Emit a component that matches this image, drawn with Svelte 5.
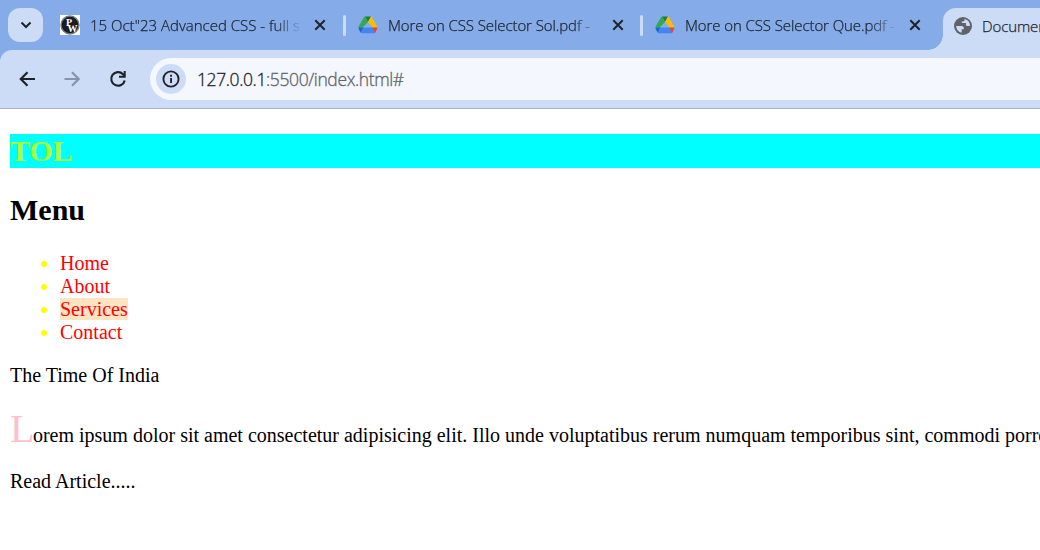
<script>
  const tabs = [
    { title: '15 Oct"23 Advanced CSS - full s', icon: 'pw' },
    { title: 'More on CSS Selector Sol.pdf -', icon: 'drive' },
    { title: 'More on CSS Selector Que.pdf -', icon: 'drive' }
  ];
  const menu = ['Home', 'About', 'Services', 'Contact'];
</script>

<div class="window">
  <header class="tabs">
    <button class="search" aria-label="Search tabs">
      <svg width="12" height="8" viewBox="0 0 12 8"><path d="M1.5 1.5 6 6l4.5-4.5" fill="none" stroke="#1f2329" stroke-width="2" /></svg>
    </button>
    {#each tabs as tab, i}
      <div class="tab">
        {#if tab.icon === 'pw'}
          <svg class="favicon" width="20" height="20" viewBox="0 0 20 20">
            <rect width="20" height="20" fill="#fff" />
            <circle cx="10" cy="10" r="9" fill="#181c20" stroke="#777b7f" stroke-width="1.4" />
            <text class="p" x="6" y="10.5">P</text><text class="w" x="7.6" y="16.8">W</text>
          </svg>
        {:else}
          <svg class="favicon" width="20" height="20" viewBox="0 0 20 20">
            <path d="M7 1.5h6L10 7z" fill="#188038" />
            <path d="M7 1.5 10 7 4.4 12.8H.7Q.2 12.2.7 11.3L6 2.3Q6.4 1.5 7 1.5z" fill="#34a853" />
            <path d="M13 1.5q.6 0 1 .8l5 9q.5.9.2 1.5h-4.3L10 7z" fill="#fbbc04" />
            <path d="M.7 12.5h5L3 17.8q-.5-.2-.8-.8L.7 14Q.2 13.2.7 12.5z" fill="#1967d2" />
            <path d="M5.4 12.5h9.1l2.7 5.4q-.3.3-1 .3H4q-.7 0-1-.4z" fill="#4285f4" />
            <path d="M14.3 12.5h4.9q.2.6-.2 1.4l-1.3 3.4-.8.8z" fill="#ea4335" />
          </svg>
        {/if}
        <span class="title t{i}">{tab.title}</span>
        <svg class="close" width="12" height="12" viewBox="0 0 12 12"><path d="m1.3 1.3 9.4 9.4m0-9.4-9.4 9.4" stroke="#1f2329" stroke-width="2" /></svg>
      </div>
      {#if i < 2}<i class="divider d{i}"></i>{/if}
    {/each}
    <div class="active">
      <svg width="20" height="20" viewBox="0 0 20 20">
        <circle cx="10" cy="10" r="9" fill="#5f6368" />
        <path d="M11.8 3Q17 4.6 17 10h-2.5q-1.6 0-1.6-1.5V7H10q-1.5 0-1.5-1.5h1.3q1.8 0 2-2.5zM3.1 10h5.6q2.1 0 2.1 2.1v1.2H8.7v3.5Q3.8 15.7 3.1 10z" fill="#ccdcf6" />
      </svg>
      <span>Document</span>
    </div>
  </header>

  <nav class="toolbar">
    <svg class="back" width="20" height="20" viewBox="0 0 20 20"><path d="M18 10H4m6.5-6.7L3.8 10l6.7 6.7" fill="none" stroke="#1f2329" stroke-width="2.2" /></svg>
    <svg class="forward" width="20" height="20" viewBox="0 0 20 20"><path d="M2.5 10h14M10 3.3l6.7 6.7-6.7 6.7" fill="none" stroke="#8793a8" stroke-width="2.2" /></svg>
    <svg class="reload" width="20" height="20" viewBox="0 0 20 20"><path d="M16.7 11.4A6.8 6.8 0 1 1 15 5.2l1.7 1.9" fill="none" stroke="#1f2329" stroke-width="2.2" /><path d="M17.7 2v6.8H11V6.7h4.7V2z" fill="#1f2329" /></svg>
    <div class="address">
      <span class="info"><svg width="18" height="18" viewBox="0 0 18 18"><circle cx="9" cy="9" r="7.6" fill="none" stroke="#1f2329" stroke-width="1.9" /><path d="M8.1 4.8H10v1.9H8.1zm0 3.3H10v5H8.1z" fill="#1f2329" /></svg></span>
      <span class="url"><b>127.0.0.1</b>:5500/index.html#</span>
    </div>
  </nav>

  <main>
    <h1>TOL</h1>
    <h2>Menu</h2>
    <ul>
      {#each menu as item}
        <li><a href="#top" class:visited={item === 'Services'}>{item}</a></li>
      {/each}
    </ul>
    <p>The Time Of India</p>
    <p class="lorem">Lorem ipsum dolor sit amet consectetur adipisicing elit. Illo unde voluptatibus rerum numquam temporibus sint, commodi porro</p>
    <p class="read">Read Article.....</p>
  </main>
</div>

<style>
  :global(body) { margin: 0; background: #fff; overflow: hidden; }
  .window { width: 1040px; height: 550px; overflow: hidden; background: #fff; }
  svg { display: block; flex: none; }
  .tabs { height: 50px; box-sizing: border-box; display: flex; align-items: center; padding-left: 8px; background: #85ace9; font: 15px "Open Sans", sans-serif; color: #1f2329; box-shadow: 0 10px #85ace9; }
  .search { width: 35px; height: 34px; flex: none; padding: 0; border: 0; border-radius: 12px; background: #ccdcf6; display: grid; place-items: center; margin-right: 17px; }
  .tab { display: flex; align-items: center; width: 266px; flex: none; }
  .title { margin-left: 10px; width: 209px; overflow: hidden; white-space: nowrap; font-weight: 300; line-height: 24px; letter-spacing: -.09px; -webkit-text-stroke: .25px #1f2329; mask-image: linear-gradient(90deg, #000 185px, transparent 213px); }
  .t0 { letter-spacing: 0; }
  .close { margin-left: auto; }
  .divider { width: 3px; height: 21px; flex: none; border-radius: 2px; background: #ccdcf6; margin: 0 12px 0 17px; }
  .d1 { margin-left: 16px; }
  .p, .w { font: bold 10px "Liberation Serif", serif; fill: #fff; }
  .active { align-self: flex-end; height: 42px; flex: none; width: 120px; display: flex; align-items: center; box-sizing: border-box; padding: 0 0 6px 10px; margin-left: 22px; background: #ccdcf6; border-radius: 13px 0 0; position: relative; font-weight: 300; -webkit-text-stroke: .25px #1f2329; }
  .active::before { content: ""; position: absolute; left: -15px; bottom: 0; width: 15px; height: 15px; background: radial-gradient(circle at 0 0, transparent 14.5px, #ccdcf6 15px); }
  .active span { margin-left: 9px; letter-spacing: -.1px; }
  .toolbar { position: relative; height: 59px; box-sizing: border-box; border-bottom: 1px solid #a5b1cb; border-radius: 12px 0 0; background: #ccdcf6; display: flex; align-items: center; padding-left: 17px; }
  .forward { margin-left: 25px; }
  .reload { margin-left: 26px; }
  .address { height: 42px; width: 960px; flex: none; border-radius: 21px; background: #f4f7fd; display: flex; align-items: center; margin-left: 22px; }
  .info { width: 30px; height: 30px; border-radius: 50%; background: #ccdcf6; display: grid; place-items: center; margin-left: 6px; }
  .url { margin-left: 11px; font: 300 17.5px "Open Sans", sans-serif; color: #5f6368; letter-spacing: -.38px; -webkit-text-stroke: .3px; white-space: nowrap; }
  .url b { font-weight: 300; color: #1f2329; }
  main { padding: 25px 0 0 10px; font: 20px/23px "Liberation Serif", serif; color: #000; }
  h1, h2 { font-size: 30px; line-height: 34px; margin: 0; }
  h1 { background: #0ff; color: #adff2f; }
  h2 { margin-top: 25px; }
  ul { list-style: disc; padding-left: 50px; margin: 25px 0 20px; }
  li { color: #ff0; }
  a { color: #f00; text-decoration: none; }
  .visited { background: #ffe4c4; }
  p { margin: 0; white-space: nowrap; }
  .lorem { margin-top: 19px; line-height: 45px; }
  .lorem::first-letter { font-size: 40px; color: #ffc0cb; letter-spacing: -1.5px; }
  .read { margin-top: 12px; }
</style>
